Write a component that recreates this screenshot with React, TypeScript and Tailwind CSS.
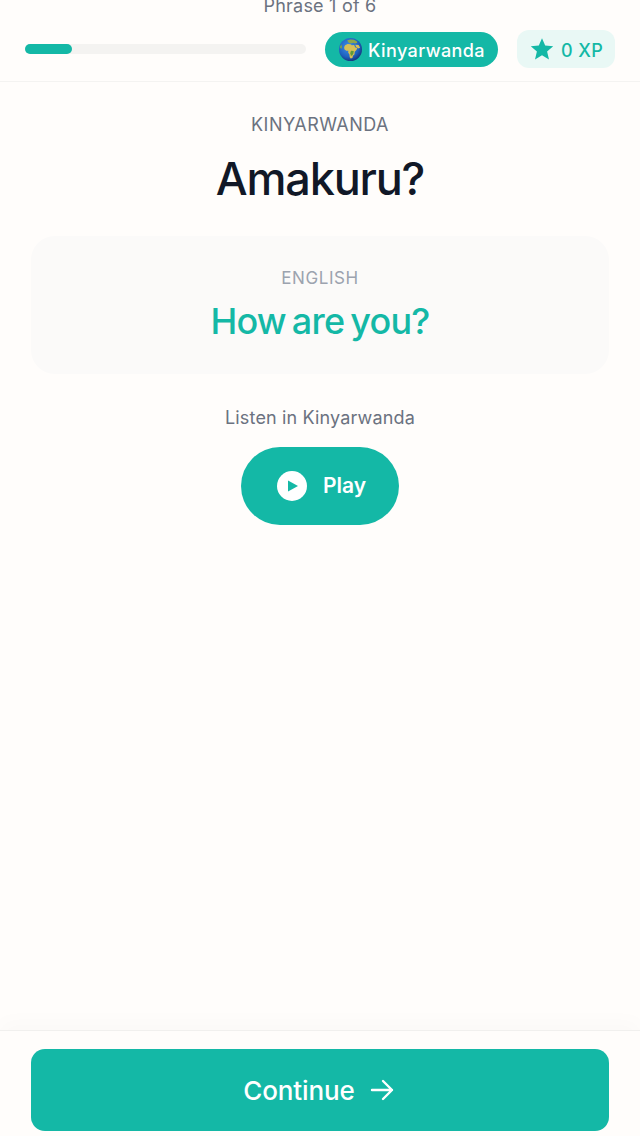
import React from 'react';

function Globe() {
  return (
    <svg viewBox="0 0 24 24" className="w-[23px] h-[23px] shrink-0">
      <defs>
        <radialGradient id="sea" cx="42%" cy="38%" r="68%">
          <stop offset="0%" stopColor="#3d92e8" />
          <stop offset="65%" stopColor="#1f62c0" />
          <stop offset="100%" stopColor="#142e70" />
        </radialGradient>
      </defs>
      <circle cx="12" cy="12" r="12" fill="url(#sea)" />
      {/* europe */}
      <path d="M8.5 2.6l3-1 4 .2 3 1.6.6 1.6-2.4.8-1.8-.8-1.6.6-2.2-.2-1.4-1z" fill="#8fa84a" />
      {/* africa */}
      <path d="M6.4 7.6l2.6-1.4 3 .4 1.4 1 2.4-.2 1 2.2 2.4 1-1.2 2.2-1.6 1.6-.2 2.6-1.6 1.6-.6 2.2-1.8.6-1-1.4-.4-3-1.2-1.6.2-2-2.2 0-2-1.6-.2-2.4z" fill="#d8bf55" />
      <path d="M12.6 13.4l2.8.2-.4 2.6-1.2 2-1.4.2-.6-2.4.2-1.4z" fill="#5f9a3c" />
      {/* arabia */}
      <path d="M17 7l3.4.4 1.6 2.4-1.4 1.2-2.6-1.4z" fill="#d8bf55" />
      <path d="M.8 9.6l1.6-3.2.8 2.8-.8 2.4z" fill="#7ba34a" />
    </svg>
  );
}

export default function App() {
  return (
    <div className="h-[1136px] w-[640px] overflow-hidden bg-[#fffdfb] flex flex-col font-['Inter',sans-serif]">
      {/* Header */}
      <div className="h-[82px] shrink-0 border-b border-[#f4f3f1] px-[25px]">
        <p className="-mt-[6px] text-center text-[18px] leading-[24px] text-[#6b7280] tracking-[0.22px]">Phrase 1 of 6</p>
        <div className="mt-[12px] flex items-center">
          <div className="w-[281px] h-[10px] rounded-full bg-[#f4f3f1]">
            <div className="w-[47px] h-[10px] rounded-full bg-[#14b8a6]" />
          </div>
          <div className="ml-[19px] h-[35px] w-[173px] rounded-full bg-[#14b8a6] flex items-center pl-[14px] gap-[6px]">
            <Globe />
            <span className="pt-[2px] text-[18px] font-medium text-white tracking-[0.4px]">Kinyarwanda</span>
          </div>
          <div className="ml-[19px] h-[38px] w-[98px] rounded-[12px] bg-[#e9f8f5] flex items-center pl-[13px] gap-[7px]">
            <svg viewBox="0 0 24 24" className="w-[24px] h-[24px]" fill="#14b8a6">
              <path d="M12 1.2l3.2 7.4 8 .7-6.1 5.3 1.9 7.9L12 18.3l-7 4.2 1.9-7.9L.8 9.3l8-.7z" />
            </svg>
            <span className="pt-[2px] text-[18px] font-medium text-[#14b8a6] tracking-[0.4px]">0 XP</span>
          </div>
        </div>
      </div>

      {/* Phrase */}
      <div className="flex-1 px-[31px] flex flex-col items-center">
        <p className="mt-[32px] text-[18px] leading-[22px] text-[#6b7280] tracking-[0.45px]">KINYARWANDA</p>
        <h1 className="mt-[15px] text-[45px] leading-[56px] font-medium text-[#111827] tracking-[-1.2px]">Amakuru?</h1>
        <div className="mt-[29px] w-full h-[138px] rounded-[24px] bg-[#fbfaf9] flex flex-col items-center">
          <p className="mt-[32px] text-[17px] leading-[20px] text-[#9ca3af] tracking-[0.6px]">ENGLISH</p>
          <p className="mt-[11px] text-[36px] leading-[44px] font-medium text-[#14b8a6] tracking-[-0.75px] [word-spacing:-3px]">How are you?</p>
        </div>
        <p className="mt-[32px] text-[18px] leading-[24px] text-[#6b7280] tracking-[0.15px]">Listen in Kinyarwanda</p>
        <button className="mt-[17px] w-[158px] h-[78px] rounded-full bg-[#14b8a6] flex items-center pl-[36px] gap-[16px]">
          <svg viewBox="0 0 30 30" className="w-[30px] h-[30px]">
            <circle cx="15" cy="15" r="15" fill="#fff" />
            <path d="M11 9.5L21 15l-10 5.5z" fill="#14b8a6" />
          </svg>
          <span className="text-[21px] font-semibold text-white">Play</span>
        </button>
      </div>

      {/* Footer */}
      <div className="h-[106px] shrink-0 border-t border-[#f1f0ee] px-[31px] pt-[18px] bg-[#fffdfb] shadow-[0_-8px_20px_rgba(0,0,0,0.02)]">
        <button className="w-full h-[82px] rounded-[14px] bg-[#14b8a6] flex items-center justify-center gap-[15px] pr-[3px]">
          <span className="pt-[1px] text-[26px] font-medium text-white tracking-[-0.1px]">Continue</span>
          <svg viewBox="0 0 24 24" className="w-[24px] h-[24px]" fill="none" stroke="#fff" strokeWidth="2.4" strokeLinecap="round" strokeLinejoin="round">
            <path d="M2 12h20M13 3l9 9-9 9" />
          </svg>
        </button>
      </div>
    </div>
  );
}
